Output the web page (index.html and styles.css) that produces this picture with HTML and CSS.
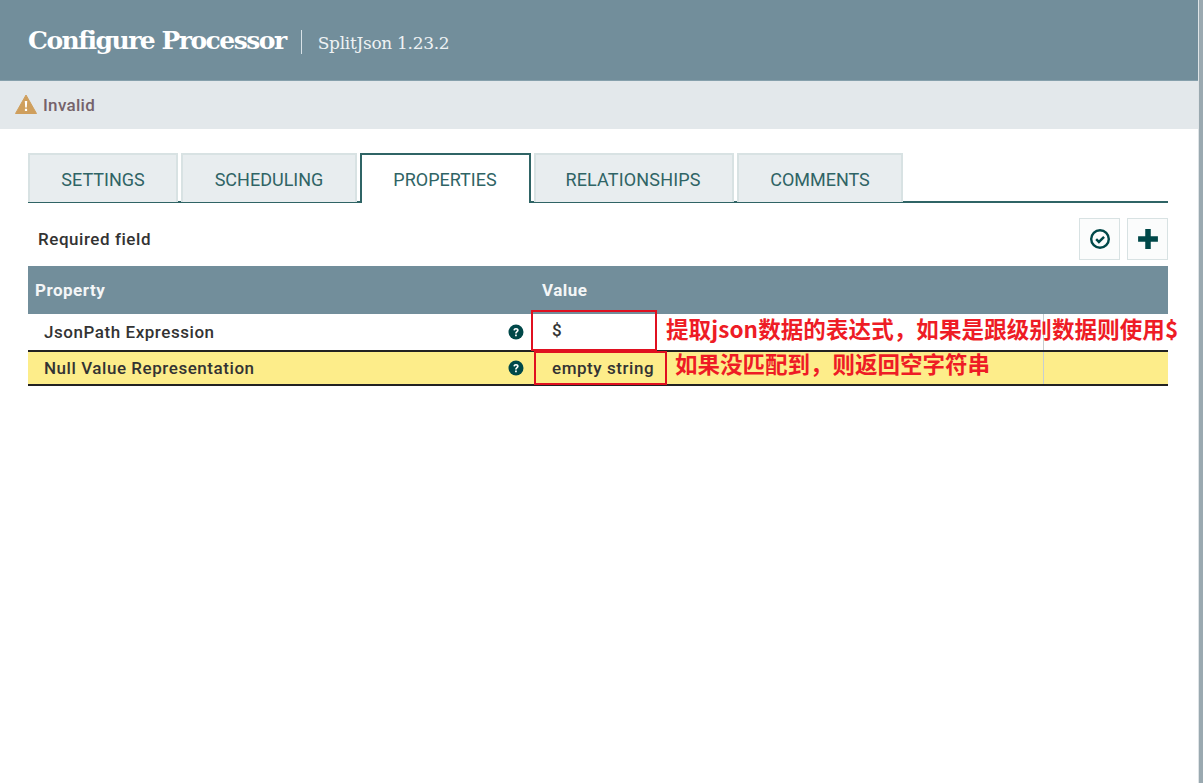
FILE: index.html
```html
<!DOCTYPE html>
<html lang="en">
<head>
<meta charset="utf-8">
<title>Configure Processor</title>
<link rel="stylesheet" href="styles.css">
</head>
<body>
<div class="page">
<div class="dialog">
  <header class="head">
    <span class="title">Configure Processor</span>
    <span class="sep"></span>
    <span class="sub">SplitJson 1.23.2</span>
  </header>
  <div class="status">
    <svg class="warn" width="22" height="20" viewBox="0 0 22 20"><path d="M11 1 21.500 19.500H.5Z" fill="#cf9f5d" stroke="#cf9f5d" stroke-linejoin="round" stroke-width="1"/><path d="M9.800 7h2.400l-.4 6.500h-1.600ZM9.900 14.800h2.200v2.200H9.900Z" fill="#fff"/></svg>
    <span class="invalid">Invalid</span>
  </div>
  <main class="content">
    <nav class="tabs">
      <div class="tab t1">SETTINGS</div>
      <div class="tab t2">SCHEDULING</div>
      <div class="tab t3 active">PROPERTIES</div>
      <div class="tab t4">RELATIONSHIPS</div>
      <div class="tab t5">COMMENTS</div>
    </nav>
    <div class="bar">
      <span class="req">Required field</span>
      <div class="btns">
        <button class="btn"><svg width="22" height="22" viewBox="0 0 20 20"><circle cx="10" cy="10" r="8" fill="none" stroke="#004849" stroke-width="2.200"/><path d="M6.500 10.200 9 12.700l4.700-4.700" fill="none" stroke="#004849" stroke-width="2.200"/></svg></button>
        <button class="btn"><svg width="22" height="22" viewBox="0 0 20 20"><path d="M7.500 1h5v6.500H19v5h-6.500V19h-5v-6.500H1v-5h6.500Z" fill="#004849"/></svg></button>
      </div>
    </div>
    <div class="table">
      <div class="row thead"><div class="cprop">Property</div><div class="cval">Value</div></div>
      <div class="row r1">
        <div class="cprop name">JsonPath Expression<svg class="help" width="16" height="16" viewBox="0 0 16 16"><circle cx="8" cy="8" r="7.500" fill="#004849"/><path d="M5.400 6.300C5.500 4.800 6.500 4 8 4s2.700.9 2.700 2.200c0 1.800-2 1.800-2 3.300H7.100c0-2.300 1.900-2.300 1.900-3.300 0-.5-.4-.8-1-.8s-1 .4-1.100 1ZM7.100 10.500h1.700v1.700H7.100Z" fill="#fff"/></svg></div>
        <div class="cval data">
          <span class="boxed b1">$</span>
          <span class="note n1">提取json数据的表达式，如果是跟级别数据则使用$</span>
        </div>
        <div class="cend"></div>
      </div>
      <div class="row r2">
        <div class="cprop name">Null Value Representation<svg class="help" width="16" height="16" viewBox="0 0 16 16"><circle cx="8" cy="8" r="7.500" fill="#004849"/><path d="M5.400 6.300C5.500 4.800 6.500 4 8 4s2.700.9 2.700 2.200c0 1.800-2 1.800-2 3.300H7.100c0-2.300 1.900-2.300 1.900-3.300 0-.5-.4-.8-1-.8s-1 .4-1.100 1ZM7.100 10.500h1.700v1.700H7.100Z" fill="#fff"/></svg></div>
        <div class="cval data">
          <span class="boxed b2">empty string</span>
          <span class="note n2">如果没匹配到，则返回空字符串</span>
        </div>
        <div class="cend"></div>
      </div>
    </div>
  </main>
</div>
<div class="scroll"></div>
</div>
</body>
</html>
```
FILE: styles.css
```css
* { box-sizing: border-box; }
html, body { margin: 0; height: 100%; background: #fff; overflow: hidden; }
body { font-family: Roboto, "Noto Sans CJK SC", sans-serif; color: #262626; }
.page { display: flex; width: 1203px; height: 783px; }
.dialog { height: 783px; width: 1198px; flex: none; display: flex; flex-direction: column; }
.scroll { flex: 1; background: #9aa9b0; border-left: 1px solid #dfe4e7; }
.head { height: 81px; flex: none; background: #728e9b; display: flex; align-items: center; padding: 0 0 0 28px; color: #fff; border-bottom: 1px solid #86a0ac; }
.title { font: 700 25px "DejaVu Serif", serif; letter-spacing: -1.5px; }
.sep { width: 1px; height: 24px; background: #d8e2e7; margin: 4px 16px 0 15px; }
.sub { font: 400 17px "DejaVu Serif", serif; letter-spacing: -0.3px; margin-top: 6px; color: #eef2f4; }
.status { height: 48px; flex: none; background: #e3e8eb; display: flex; align-items: center; padding-left: 15px; gap: 6px; }
.warn { flex: none; margin-top: -3px; }
.invalid { font: 500 17px Roboto, sans-serif; letter-spacing: .3px; color: #75626a; }
.content { padding: 24px 30px 0 28px; width: 1198px; }
.tabs { display: flex; height: 50px; border-bottom: 2px solid #2f6465; gap: 3px; }
.tab { height: 49px; background: #e8edef; border: 2px solid #d8e2e3; border-bottom: 0; display: flex; align-items: center; justify-content: center; font: 400 18px Roboto, sans-serif; color: #2f6465; padding-top: 2px; }
.t1 { width: 150px; }
.t2 { width: 176px; }
.t3 { width: 171px; background: #fff; border: 2px solid #2f6465; border-bottom: 0; height: 50px; position: relative; z-index: 1; padding-top: 1px; padding-right: 1px; }
.t3::after { content: ""; position: absolute; left: 0; right: 0; bottom: -2px; height: 2px; background: #fff; }
.t4 { width: 200px; padding-right: 2px; letter-spacing: .15px; }
.t5 { width: 166px; }
.bar { height: 64px; margin-bottom: -1px; display: flex; align-items: center; justify-content: space-between; padding-left: 10px; }
.req { font: 500 17px Roboto, sans-serif; letter-spacing: .55px; color: #333; margin-top: 7px; }
.btns { display: flex; gap: 7px; margin-top: 8px; }
.btn { width: 41px; height: 42px; padding: 0; background: #fbfcfc; border: 1px solid #d8e2e3; display: flex; align-items: center; justify-content: center; }
.table { display: flex; flex-direction: column; }
.row { display: flex; }
.thead { height: 48px; background: #728e9b; color: #f4f6f7; font: 700 17px Roboto, sans-serif; letter-spacing: .5px; align-items: center; }
.thead .cprop { padding-left: 7px; width: 514px; }
.cprop { width: 503px; flex: none; }
.r1 { height: 36px; background: #fff; }
.r2 { height: 36px; background: #fded8a; border-top: 2px solid #222; border-bottom: 2px solid #222; }
.name { width: 503px; padding: 0 7px 0 16px; display: flex; align-items: center; justify-content: space-between; font: 500 17px Roboto, sans-serif; letter-spacing: .55px; color: #333; }
.cval { flex: none; }
.data { width: 512px; display: flex; align-items: center; position: relative; }
.boxed { display: flex; align-items: center; border: 2px solid #e01020; font: 500 17px Roboto, sans-serif; letter-spacing: .55px; color: #333; position: relative; z-index: 1; }
.b1 { width: 126px; height: 41px; padding-left: 19px; margin-top: -4px; }
.b2 { width: 133px; height: 34px; padding-left: 16px; margin-left: 3px; }
.note { position: absolute; font: 700 22.500px "Noto Sans CJK SC", sans-serif; color: #ee1c25; white-space: nowrap; z-index: 2; }
.n1 { left: 135px; top: -2px; letter-spacing: .1px; }
.n2 { left: 144px; top: -5px; }
.cend { flex: 1; border-left: 1px solid #c7ced1; }
```
